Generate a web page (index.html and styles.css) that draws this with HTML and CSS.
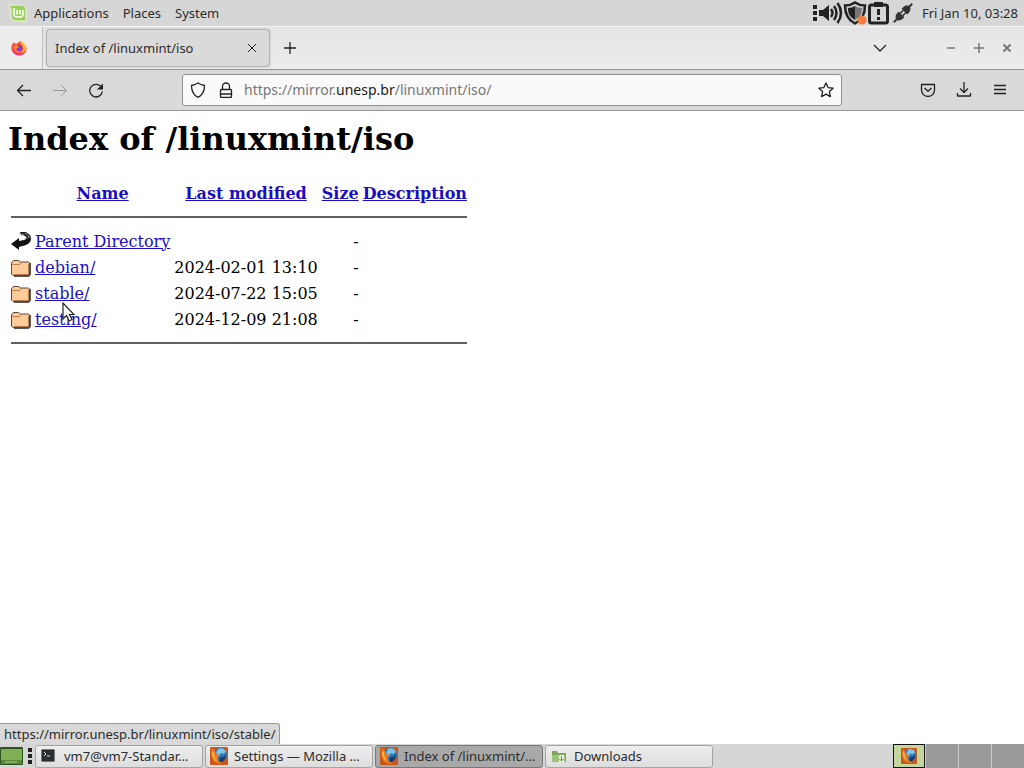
FILE: index.html
```html
<!DOCTYPE html>
<html lang="en">
<head>
<meta charset="utf-8">
<meta name="viewport" content="width=device-width, initial-scale=1">
<title>Index of /linuxmint/iso</title>
<link rel="stylesheet" href="styles.css">
</head>
<body class="desktop">
<svg class="defs" width="0" height="0" aria-hidden="true">
  <defs>
    <symbol id="folder" viewBox="0 0 20 22">
      <path d="M3 20h14.500l1.500-1.500V7" fill="none" stroke="#222" stroke-width="1.500"/>
      <path d="M.5 7 2.500 4.500h5l2 1.500h8l1 1v11l-1.500 1.500H2L.5 18z" fill="#ffcc99" stroke="#5a4432"/>
      <path d="M1.500 8.500h7l2-2" fill="none" stroke="#b97b4c"/>
      <path d="M17.500 8v10.500H3" fill="none" stroke="#b97b4c"/>
    </symbol>
    <symbol id="fox" viewBox="0 0 18 18">
      <rect width="18" height="18" rx="1" fill="#c9571c"/>
      <circle cx="10" cy="8" r="7" fill="#2c78b8"/>
      <path d="M8 2c3-2 7 0 8 3l-3 2-2-1-2 3-3-3z" fill="#7cc4ea"/>
      <path d="M10 10c3 1 5-1 6-3 0 6-4 9-7 8z" fill="#173c6b"/>
      <path d="M2 1c-1 4-1 8 1 12 2 3 6 5 11 3-4 0-7-3-6-6l2-2-4-1-1-3z" fill="#ee7a20"/>
      <path d="M2 4c0 4 1 8 5 11-2-3-3-6-3-9z" fill="#ffc04a"/>
    </symbol>
  </defs>
</svg>

<header class="panel">
  <nav class="menus" aria-label="Desktop menu">
    <svg class="mint" viewBox="0 0 18 18" aria-hidden="true">
      <path d="M1 1h11a5 5 0 0 1 5 5v11H7a5 5 0 0 1-5-5V5H1z" fill="#9bd15a" stroke="#eef7df" stroke-width="1"/>
      <path d="M5 4v6.500A2.500 2.500 0 0 0 7.500 13h4a2.500 2.500 0 0 0 2.500-2.500V6M8 6v4.500M11 6v4.500" fill="none" stroke="#fff" stroke-width="1.500"/>
    </svg>
    <button class="menu">Applications</button>
    <button class="menu">Places</button>
    <button class="menu">System</button>
  </nav>
  <div class="tray">
    <svg class="tray-icons" viewBox="0 0 102 26" aria-hidden="true">
      <g fill="#222"><rect x="1" y="5" width="4" height="4"/><rect x="1" y="11" width="4" height="4"/><rect x="1" y="17" width="4" height="4"/>
      <path d="M7 10h4l6-5v16l-6-5H7z"/></g>
      <g fill="none" stroke="#222" stroke-width="2.500"><path d="M19 9q3 4 0 8M22 6q5 7 0 14M25.500 3q7 10 0 20"/></g>
      <path d="M43 2.500c-3 2-6 3-10 3 0 8 2 14 10 18 8-4 10-10 10-18-4 0-7-1-10-3z" fill="#ccc" stroke="#222" stroke-width="2.500"/>
      <path d="M43 6c-2 1-4 2-7 2 0 6 2 9 7 12z" fill="#222"/><path d="M43 6c2 1 4 2 7 2 0 6-2 9-7 12z" fill="#777"/>
      <circle cx="50" cy="20" r="4.500" fill="#f47b3d"/>
      <rect x="57.500" y="5" width="18" height="18" rx="2" fill="none" stroke="#222" stroke-width="3"/>
      <path d="M62 2h9v5h-9z" fill="#222"/><path d="M65 9h3v6h-3zM65 17h3v3h-3z" fill="#222"/>
      <g transform="translate(91 13) rotate(-45)" fill="#333">
        <path d="M-13-1h5v2h-5zM8-1h5v2H8z"/>
        <path d="M-9-1.500q2-2.500 4-2.500h3v8h-3q-2 0-4-2.500zM9-1.500Q7-4 5-4H2v8h3q2 0 4-2.500z"/>
        <path d="M-2-2.500h4v1.500h-4zM-2 1h4v1.500h-4z"/>
      </g>
    </svg>
    <time class="clock" datetime="2025-01-10T03:28">Fri Jan 10, 03:28</time>
  </div>
</header>

<main class="browser">
  <div class="tabs">
    <button class="pinned" aria-label="Firefox View">
      <svg class="i16" viewBox="0 0 16 16" aria-hidden="true">
        <path d="M3 2.500 5 4c2-1 3-2 4-3 2 1 3 3 4 3 2 2 3 4 2.500 6-1 3.500-4 5-7 5C4 15 1 12.500.500 9 0 6 1 4 3 2.500z" fill="#ff4b3e"/>
        <path d="M9 1c3 1 6 4 6.500 7-.5 3-3 5-6 5 3-2 4-5 1-8z" fill="#ffbd2f"/>
        <path d="M1 8c1 4 4 6 8 6 3 0 5-2 6-4-1 4-4 5.500-7 5.500C4 15.500 1 12 1 8z" fill="#f52a78"/>
        <circle cx="8" cy="8" r="3.300" fill="#8a3bd1"/><path d="M3 6c2-1 4-1 5 1L5 9c0 2 3 3 5 2-2 3-7 1-7-5z" fill="#ff9328"/>
      </svg>
    </button>
    <div class="tab">
      <span class="tab-title">Index of /linuxmint/iso</span>
      <button class="bare" aria-label="Close tab"><svg class="i16" viewBox="0 0 16 16"><path d="m4 4 8 8m0-8-8 8" class="ln"/></svg></button>
    </div>
    <button class="bare new" aria-label="New tab"><svg class="i16" viewBox="0 0 16 16"><path d="M8 2v12M2 8h12" class="ln medium"/></svg></button>
    <button class="bare list" aria-label="List all tabs"><svg class="i16" viewBox="0 0 16 16"><path d="m2 5 6 6 6-6" class="ln medium"/></svg></button>
    <div class="window-buttons">
      <button class="bare" aria-label="Minimize"><svg class="i12" viewBox="0 0 12 12"><path d="M2 6h8" class="ln gray"/></svg></button>
      <button class="bare" aria-label="Maximize"><svg class="i12" viewBox="0 0 12 12"><path d="M1 6h10M6 1v10" class="ln gray"/></svg></button>
      <button class="bare" aria-label="Close window"><svg class="i12" viewBox="0 0 12 12"><path d="m2.500 2.500 7 7m0-7-7 7" class="ln gray heavy"/></svg></button>
    </div>
  </div>

  <div class="toolbar">
    <div class="nav">
      <button class="bare" aria-label="Back"><svg class="i16" viewBox="0 0 16 16"><path d="M15 8.500H1.500M7 3 1.500 8.500 7 14" class="ln medium"/></svg></button>
      <button class="bare" aria-label="Forward" disabled><svg class="i16" viewBox="0 0 16 16"><path d="M1 8.500h13.500M9 3l5.500 5.500L9 14" class="ln faint"/></svg></button>
      <button class="bare" aria-label="Reload"><svg class="i16" viewBox="0 0 16 16"><path d="M13.500 5.500A6.300 6.300 0 1 0 14.300 9.500" class="ln medium"/><path d="M15 1.500v6H9z" fill="#222"/></svg></button>
    </div>
    <div class="address">
      <svg class="i16" viewBox="0 0 16 16" aria-hidden="true"><path d="M8 1C6 2.300 4 3 1.500 3.500 1.500 9 3 13 8 15.300c5-2.300 6.500-6.300 6.500-11.800C12 3 10 2.300 8 1z" class="ln medium"/></svg>
      <svg class="i16" viewBox="0 0 16 16" aria-hidden="true"><rect x="2.500" y="7.500" width="11" height="8" rx="1" class="ln medium"/><path d="M4.500 7.500V4.500a3.500 3.500 0 0 1 7 0v3M2.500 12h11" class="ln medium"/></svg>
      <div class="url" role="textbox" contenteditable="true" spellcheck="false" aria-label="Address">https://mirror.<span class="host">unesp.br</span>/linuxmint/iso/</div>
      <button class="bare" aria-label="Bookmark this page"><svg class="i16" viewBox="0 0 16 16"><path d="m8 1 2.100 4.600 5 .6-3.700 3.400 1 5L8 12.100 3.600 14.600l1-5L.900 6.200l5-.6z" class="ln medium"/></svg></button>
    </div>
    <div class="tools">
      <button class="bare" aria-label="Save to Pocket"><svg class="i16" viewBox="0 0 16 16"><path d="M1.500 2.500h13V8a6.500 6.500 0 0 1-13 0zM4.500 6 8 9.300 11.500 6" class="ln medium"/></svg></button>
      <button class="bare" aria-label="Downloads"><svg class="i16" viewBox="0 0 16 16"><path d="M8 0v10.500M4 6.500l4 4 4-4M1.500 11v3h13v-3" class="ln medium"/></svg></button>
      <button class="bare" aria-label="Application menu"><svg class="i16" viewBox="0 0 16 16"><path d="M2 3.500h12M2 7.500h12M2 11.500h12" class="ln medium"/></svg></button>
    </div>
  </div>

  <section class="page">
    <h1 class="title">Index of /linuxmint/iso</h1>
    <table class="listing">
      <thead>
        <tr><th class="icon-cell"></th><th><a href="#name">Name</a></th><th><a href="#modified">Last modified</a></th><th><a href="#size">Size</a></th><th><a href="#description">Description</a></th></tr>
        <tr class="rule-row"><th colspan="5"><hr class="rule"></th></tr>
      </thead>
      <tbody>
        <tr><td class="icon-cell"><svg class="entry" viewBox="0 0 20 22" aria-hidden="true"><path d="M9 2h6l4 3c2 4 1 8-4 10l-7 2v3l-8-6 8-6v3l5-1c3-1 3-3 1-4l-5-2z" fill="#111"/><path d="m9 3 3 2 3-2 3 4-4 2" fill="none" stroke="#888" stroke-dasharray="1 1" stroke-width="2"/></svg></td><td><a href="#parent">Parent Directory</a></td><td></td><td class="size">-</td><td></td></tr>
        <tr><td class="icon-cell"><svg class="entry"><use href="#folder"/></svg></td><td><a href="#debian">debian/</a></td><td class="date">2024-02-01 13:10</td><td class="size">-</td><td></td></tr>
        <tr><td class="icon-cell"><svg class="entry"><use href="#folder"/></svg></td><td class="hovered"><a href="#stable">stable/</a>
          <svg class="cursor" viewBox="0 0 13 20" aria-hidden="true"><path d="M1 1v16l3.500-3.500L7 19l3-1.500L7.500 12.500H12z" fill="#fff" fill-opacity=".8" stroke="#222" stroke-width="1.200"/></svg></td><td class="date">2024-07-22 15:05</td><td class="size">-</td><td></td></tr>
        <tr><td class="icon-cell"><svg class="entry"><use href="#folder"/></svg></td><td><a href="#testing">testing/</a></td><td class="date">2024-12-09 21:08</td><td class="size">-</td><td></td></tr>
      </tbody>
      <tfoot><tr class="rule-row"><th colspan="5"><hr class="rule"></th></tr></tfoot>
    </table>
    <div class="link-status">https://mirror.unesp.br/linuxmint/iso/stable/</div>
  </section>
</main>

<footer class="taskbar">
  <button class="show-desktop" aria-label="Show desktop"><svg viewBox="0 0 24 20" width="24" height="20"><rect x="0" y="1" width="23" height="18" rx="1" fill="#2f5220"/><rect x="1" y="3" width="21" height="11" fill="#7fb055"/><rect x="1" y="14" width="21" height="4" fill="#5a8a38"/><path d="M5 16h12" stroke="#a9cf88"/></svg></button>
  <svg class="handle" viewBox="0 0 4 18" aria-hidden="true"><path d="M0 1h4v4H0zM0 7h4v4H0zM0 13h4v4H0z" fill="#222"/></svg>
  <div class="tasks">
    <button class="task"><svg class="task-icon" viewBox="0 0 18 18"><rect x="1.500" y="2.500" width="13" height="12" rx="1" fill="#2b2e31" stroke="#777"/><path d="m4 5 2 2-2 2M7 9h3" stroke="#ddd" fill="none"/></svg><span class="task-name">vm7@vm7-Standar…</span></button>
    <button class="task"><svg class="task-icon"><use href="#fox"/></svg><span class="task-name">Settings — Mozilla …</span></button>
    <button class="task active"><svg class="task-icon"><use href="#fox"/></svg><span class="task-name">Index of /linuxmint/…</span></button>
    <button class="task"><svg class="task-icon" viewBox="0 0 18 18"><path d="M2 4h5l1 2h8v9H2z" fill="#7da657"/><path d="M2 8h13v7H2z" fill="#9cc278"/><path d="M9 8h5v7H9z" fill="#e8f2de"/><path d="M11.500 9v4m-2-1 2 2 2-2" stroke="#5c8a3c" fill="none"/></svg><span class="task-name">Downloads</span></button>
  </div>
  <div class="workspaces">
    <button class="space current" aria-label="Workspace 1"><svg class="space-icon" viewBox="0 0 18 18"><use href="#fox"/></svg></button>
    <button class="space" aria-label="Workspace 2"></button>
    <button class="space" aria-label="Workspace 3"></button>
    <button class="space" aria-label="Workspace 4"></button>
  </div>
</footer>
</body>
</html>
```
FILE: styles.css
```css
* { box-sizing: border-box; }
.desktop {
  margin: 0;
  min-height: 100vh;
  display: flex;
  flex-direction: column;
  background: #fff;
  color: #2c2c2c;
  font: 13px/18px "Noto Sans", "Open Sans", sans-serif;
}
.defs { position: absolute; }
button { font: inherit; color: inherit; border: 0; background: none; padding: 0; }
svg { display: block; flex: none; }

.panel {
  display: flex;
  justify-content: space-between;
  align-items: center;
  height: 26px;
  padding: 0 6px 0 9px;
  background: #d6d6d6;
}
.menus { display: flex; align-items: center; gap: 14px; }
.mint { width: 18px; height: 18px; margin-right: -7px; }
.tray { display: flex; align-items: center; gap: 8px; }
.tray-icons { width: 102px; height: 26px; }

.browser { flex: 1; display: flex; flex-direction: column; }
.tabs {
  display: flex;
  align-items: center;
  height: 44px;
  padding-right: 11px;
  border-top: 1px solid #f5f5f5;
  border-bottom: 1px solid #979797;
  background: linear-gradient(#e5e5e5, #ececec);
}
.pinned {
  display: grid;
  place-items: center;
  align-self: stretch;
  width: 43px;
  padding-right: 4px;
  border-right: 1px solid #bcbcbc;
  background: #ececec;
}
.tab {
  display: flex;
  align-items: center;
  justify-content: space-between;
  width: 224px;
  height: 38px;
  margin-left: 3px;
  padding: 0 9px 0 8px;
  border: 1px solid #b5b5b5;
  border-radius: 4px;
  background: #dadada;
  box-shadow: 0 0 2px #aaa;
}
.new { margin-left: 12px; }
.list { margin-left: auto; }
.bare { display: grid; place-items: center; }
.window-buttons { display: flex; gap: 16px; margin-left: 57px; }
.i16 { width: 16px; height: 16px; }
.i12 { width: 12px; height: 12px; }
.ln { fill: none; stroke: #222; stroke-width: 1; }
.medium { stroke-width: 1.3; stroke-linejoin: round; }
.gray { stroke: #777; stroke-width: 1.5; }
.heavy { stroke-width: 2; }
.faint { stroke: #999; }

.toolbar {
  display: grid;
  grid-template-columns: 1fr 660px 1fr;
  align-items: center;
  height: 41px;
  padding: 0 16px;
  border-bottom: 1px solid #979797;
  background: #d9d9d9;
}
.nav, .tools { display: flex; gap: 20px; }
.tools { justify-content: flex-end; }
.address {
  display: flex;
  align-items: center;
  gap: 12px;
  height: 32px;
  padding: 0 7px;
  border: 1px solid #8e8e8e;
  border-radius: 3px;
  background: #fafafa;
}
.url { flex: 1; margin-left: -2px; font-size: 14px; line-height: 20px; color: #777; outline: 0; }
.host { color: #1c1c1c; }

.page {
  position: relative;
  flex: 1;
  padding: 9px 8px 8px;
  background: #fff;
  color: #000;
  font: 16px/19px "DejaVu Serif", serif;
}
.title { margin: 0 0 20px; font-size: 32px; line-height: 39px; }
.listing { border-collapse: separate; border-spacing: 2px; }
.listing th, .listing td { padding: 1px; height: 24px; }
.listing .rule-row th { height: 20px; }
.listing a { color: #1a0dc4; text-decoration: underline; }
.icon-cell { vertical-align: top; }
.entry { width: 20px; height: 22px; }
.date, .size { text-align: right; white-space: nowrap; }
.rule { margin: 8px 0; height: 2px; border: 0; background: #606060; }
.hovered { position: relative; }
.cursor { position: absolute; left: 28px; top: 21px; width: 13px; height: 20px; }
.link-status {
  position: absolute;
  left: 0;
  bottom: 0;
  padding: 1px 4px 0;
  border: 1px solid #999;
  border-width: 1px 1px 0 0;
  border-radius: 0 3px 0 0;
  background: #d9d9d9;
  color: #2c2c2c;
  font: 13px/19px "Noto Sans", "Open Sans", sans-serif;
}

.taskbar {
  display: flex;
  align-items: center;
  height: 24px;
  background: #d6d6d6;
}
.handle { width: 4px; height: 18px; margin: 0 3px 0 4px; }
.tasks { flex: 1; display: flex; gap: 2px; }
.task {
  display: flex;
  align-items: center;
  gap: 6px;
  width: 168px;
  height: 23px;
  padding: 0 3px 0 4px;
  border: 1px solid #a5a5a5;
  border-radius: 3px;
  background: linear-gradient(#eee, #ddd);
  white-space: nowrap;
}
.active { background: #a8a8a8; border-color: #777; }
.task-icon { width: 18px; height: 18px; }
.task-name { overflow: hidden; }
.workspaces { display: flex; align-self: stretch; gap: 1px; background: #ccc; }
.space { display: grid; place-items: center; width: 32px; background: #999; }
.current { border: 1px solid #111; background: #c4d69c; }
.space-icon { width: 16px; height: 16px; }
```
